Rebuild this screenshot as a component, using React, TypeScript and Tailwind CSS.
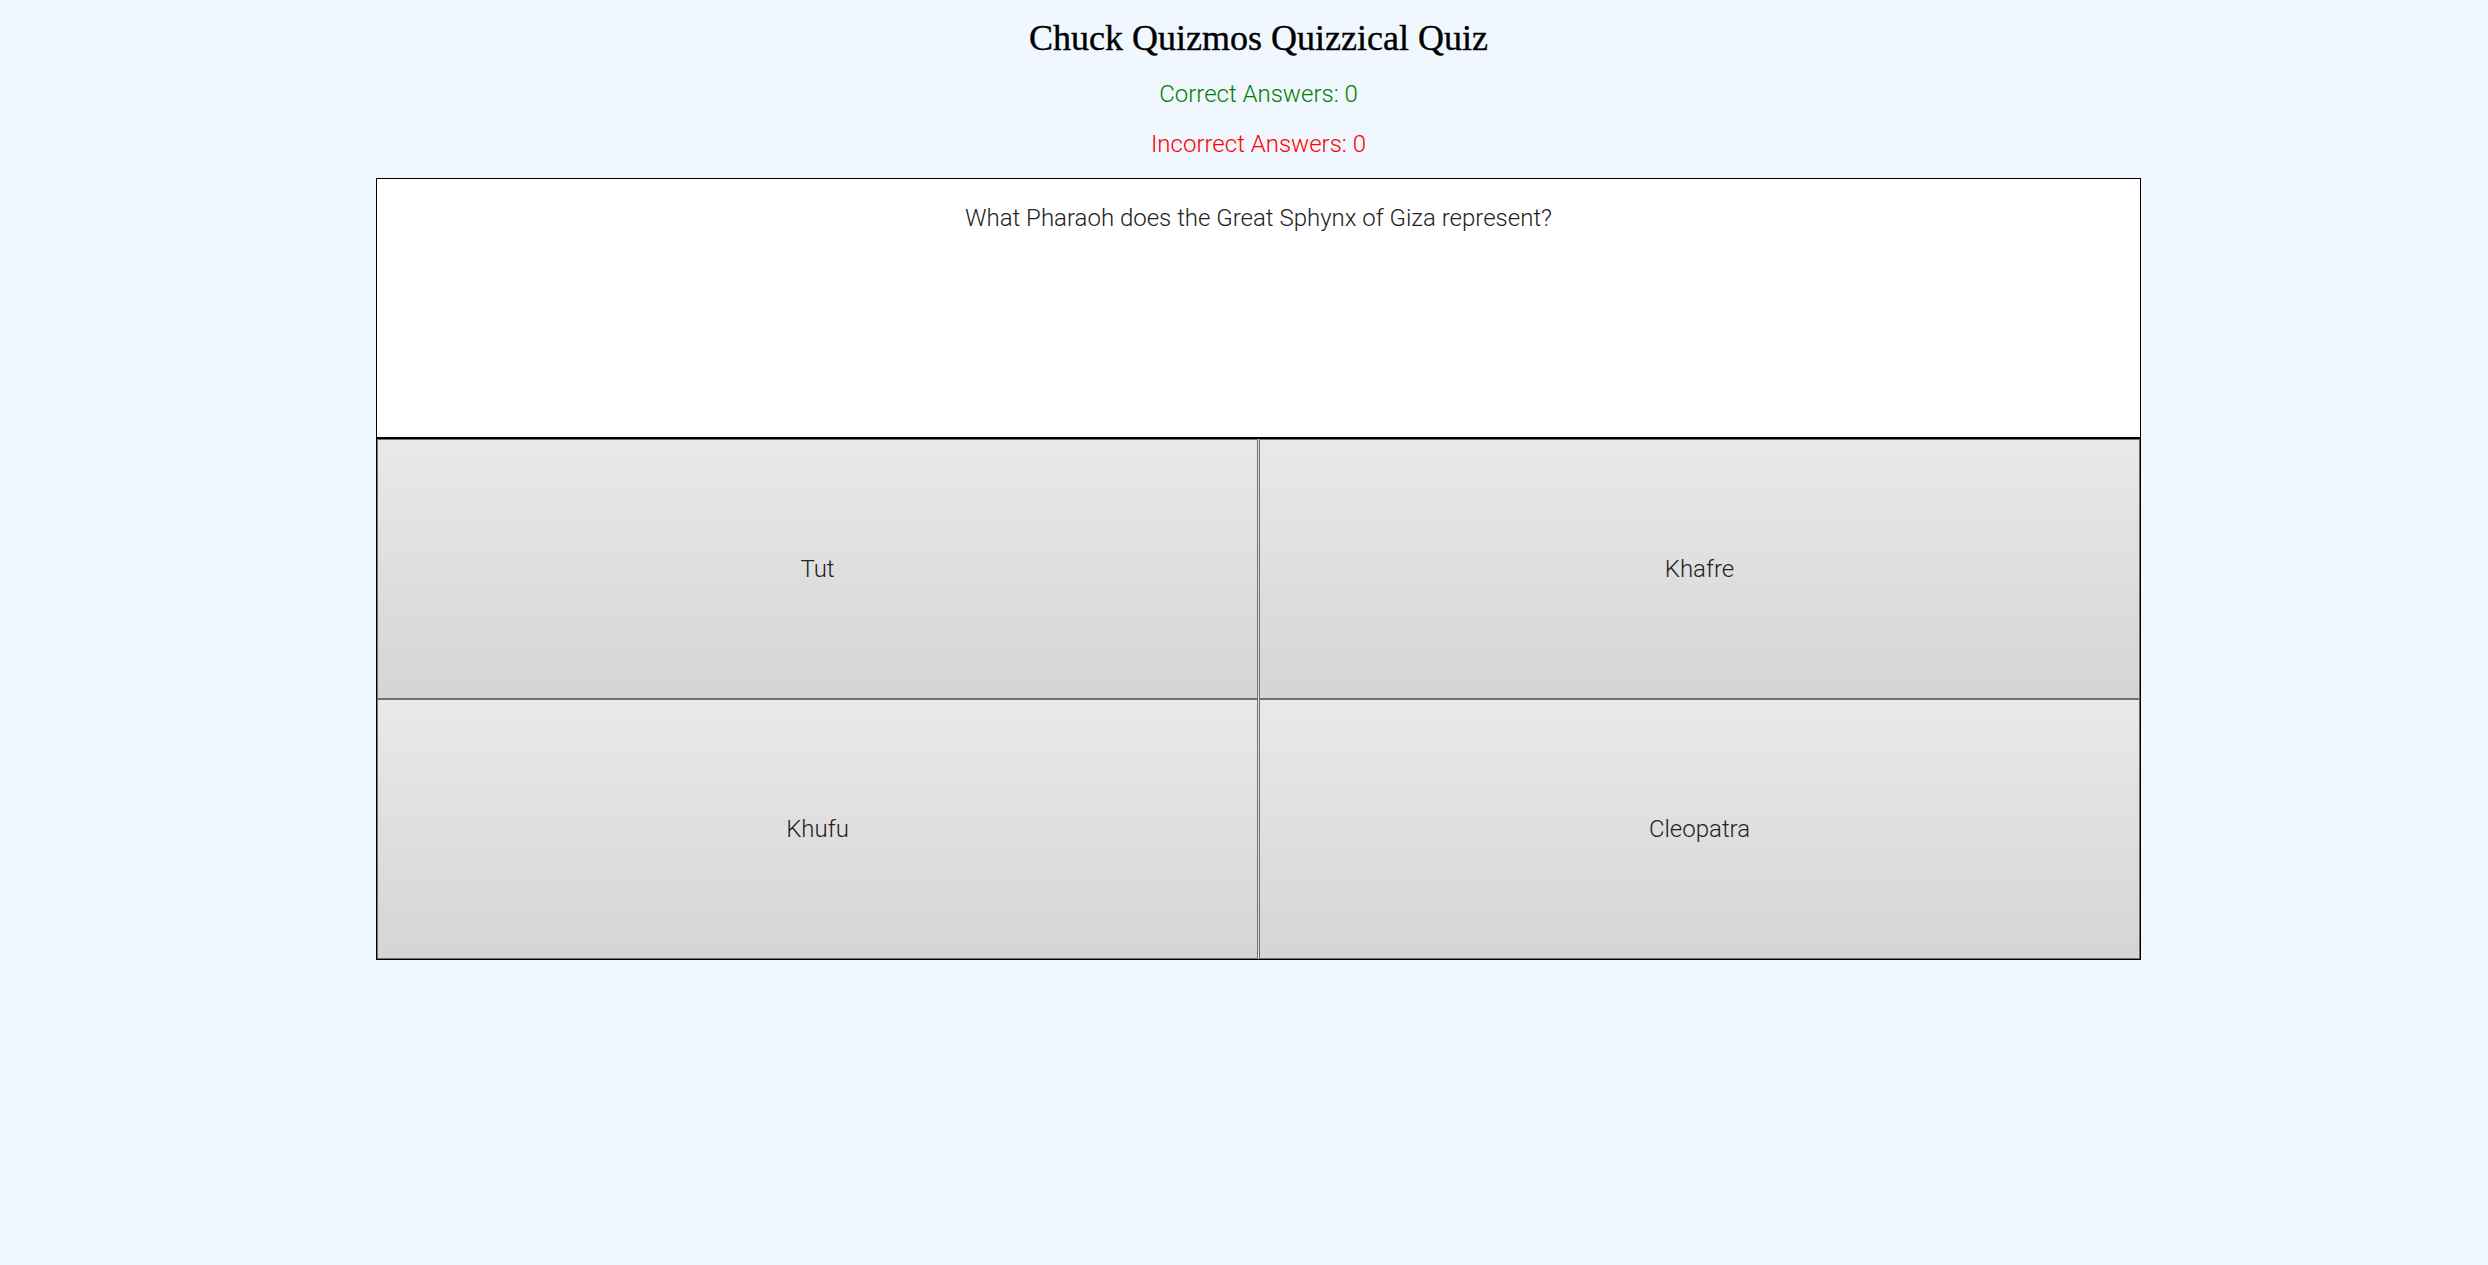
import React from "react";

const answers = ["Tut", "Khafre", "Khufu", "Cleopatra"];

const AnswerButton: React.FC<{ label: string }> = ({ label }) => (
  <button className="h-[260px] border border-[#707070] bg-gradient-to-b from-[#e9e9e9] to-[#d5d5d5] text-[24px] font-light text-[#222] [font-family:Roboto,'Liberation_Sans',sans-serif]">
    {label}
  </button>
);

export default function App() {
  return (
    <div className="min-h-[1265px] w-full bg-[#f0f7ff] [font-family:Roboto,'Liberation_Sans',sans-serif]">
      <div className="ml-[376px] w-[1765px]">
        <div className="flex flex-col items-center pt-[15px]">
          <h1 className="text-[36px] leading-[46px] text-black [font-family:'Liberation_Serif','DejaVu_Serif',serif] [-webkit-text-stroke:0.4px_black]">
            Chuck Quizmos Quizzical Quiz
          </h1>
          <p className="mt-[17px] text-[24px] leading-[32px] font-light text-[#008000]">
            Correct Answers: 0
          </p>
          <p className="mt-[18px] text-[24px] leading-[32px] font-light text-[#ff0000]">
            Incorrect Answers: 0
          </p>
        </div>
        <div className="mt-[18px] border border-black bg-white">
          <div className="h-[260px] border-b-2 border-black pt-[23px] text-center text-[24px] leading-[32px] font-light text-[#222]">
            What Pharaoh does the Great Sphynx of Giza represent?
          </div>
          <div className="grid grid-cols-2 gap-x-[1px] bg-[#e0e0e0]">
            {answers.map((a) => (
              <AnswerButton key={a} label={a} />
            ))}
          </div>
        </div>
      </div>
    </div>
  );
}
